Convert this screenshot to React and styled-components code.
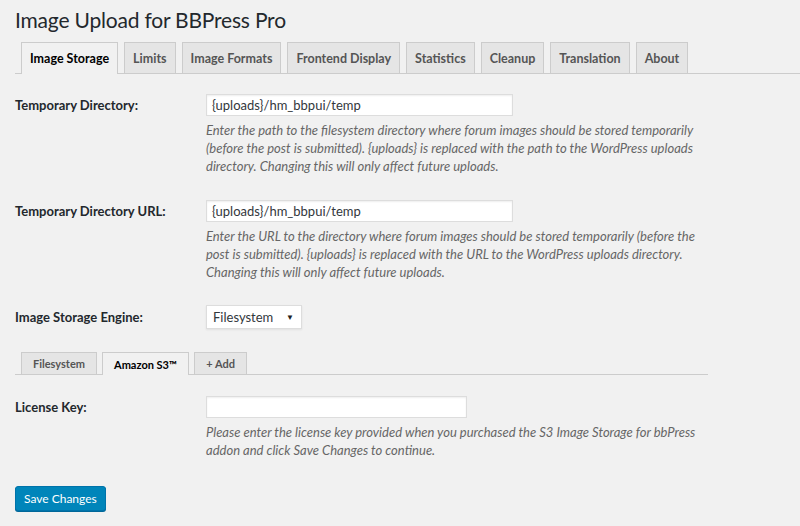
import React from 'react'
import styled, { createGlobalStyle } from 'styled-components'

const Global = createGlobalStyle`
  body {
    margin: 0;
    background: #f1f1f1;
    font-family: Lato, "Open Sans", sans-serif;
    color: #23282d;
  }
`

const Wrap = styled.div`
  padding: 0 15px;
  height: 526px;
  box-sizing: border-box;
  overflow: hidden;
`

const Title = styled.h1`
  margin: 0;
  padding: 6px 0 0;
  font-size: 21px;
  letter-spacing: -0.2px;
  font-weight: 400;
  line-height: 28px;
  color: #23282d;
`

const TabBar = styled.div`
  display: flex;
  gap: ${p => (p.small ? '5px' : '6px')};
  margin-top: ${p => p.top || '8px'};
  padding-left: 6px;
  border-bottom: 1px solid #ccc;
  width: ${p => p.width || 'auto'};
  margin-right: ${p => (p.full ? '-15px' : '0')};
`

const Tab = styled.div`
  box-sizing: border-box;
  padding: ${p => (p.small ? '0 11px' : '0 8px')};
  display: flex;
  align-items: center;
  border: 1px solid #ccc;
  border-bottom: none;
  margin-bottom: -1px;
  background: ${p => (p.active ? '#f1f1f1' : '#e5e5e5')};
  color: ${p => (p.active ? '#000' : '#555')};
  font-size: ${p => (p.small ? '11px' : '12.5px')};
  font-weight: 700;
  position: relative;
  z-index: ${p => (p.active ? 1 : 0)};
  height: ${p => (p.small ? (p.active ? '23px' : '22px') : p.active ? '32px' : '31px')};
`

const Row = styled.div`
  display: flex;
  align-items: flex-start;
  margin-top: ${p => p.top || '0'};
`

const Label = styled.label`
  width: 191px;
  flex-shrink: 0;
  font-size: 13px;
  font-weight: 700;
  color: #23282d;
  line-height: 20px;
  padding-top: ${p => p.pt || '1px'};
`

const Field = styled.div`
  display: flex;
  flex-direction: column;
`

const Input = styled.div`
  box-sizing: border-box;
  width: ${p => p.width};
  height: 22px;
  background: #fff;
  border: 1px solid #ddd;
  box-shadow: inset 0 1px 2px rgba(0, 0, 0, 0.07);
  font-size: 13px;
  line-height: 20px;
  padding: 0 5px;
  color: #32373c;
`

const Select = styled.div`
  box-sizing: border-box;
  width: 96px;
  height: 24px;
  background: #fff;
  border: 1px solid #ddd;
  box-shadow: 0 1px 2px rgba(0, 0, 0, 0.07);
  font-size: 13px;
  padding: 0 7px 0 6px;
  display: flex;
  align-items: center;
  justify-content: space-between;
  color: #32373c;
`

const Arrow = styled.span`
  font-size: 8px;
  color: #222;
`

const Desc = styled.p`
  margin: 5px 0 0;
  max-width: 492px;
  font-size: 13px;
  font-style: italic;
  line-height: 18px;
  color: #666;
`

const Button = styled.button`
  display: block;
  margin-top: 27px;
  height: 25px;
  padding: 0 8px;
  background: #0085ba;
  border: 1px solid #0073aa;
  border-radius: 3px;
  box-shadow: 0 1px 0 #006799;
  color: #fff;
  font-family: Lato, "Open Sans", sans-serif;
  font-size: 12px;
  line-height: 23px;
`

export default function App() {
  const tabs = ['Image Storage', 'Limits', 'Image Formats', 'Frontend Display', 'Statistics', 'Cleanup', 'Translation', 'About']
  return (
    <Wrap>
      <Global />
      <Title>Image Upload for BBPress Pro</Title>
      <TabBar full>
        {tabs.map((t, i) => (
          <Tab key={t} active={i === 0}>{t}</Tab>
        ))}
      </TabBar>

      <Row top="20px">
        <Label>Temporary Directory:</Label>
        <Field>
          <Input width="307px">{'{uploads}/hm_bbpui/temp'}</Input>
          <Desc>
            Enter the path to the filesystem directory where forum images should be stored temporarily
            (before the post is submitted). {'{uploads}'} is replaced with the path to the WordPress uploads
            directory. Changing this will only affect future uploads.
          </Desc>
        </Field>
      </Row>

      <Row top="25px">
        <Label>Temporary Directory URL:</Label>
        <Field>
          <Input width="307px">{'{uploads}/hm_bbpui/temp'}</Input>
          <Desc>
            Enter the URL to the directory where forum images should be stored temporarily (before the
            post is submitted). {'{uploads}'} is replaced with the URL to the WordPress uploads directory.
            Changing this will only affect future uploads.
          </Desc>
        </Field>
      </Row>

      <Row top="24px">
        <Label pt="2px">Image Storage Engine:</Label>
        <Select>
          Filesystem <Arrow>▼</Arrow>
        </Select>
      </Row>

      <TabBar small width="687px" top="23px">
        <Tab small>Filesystem</Tab>
        <Tab small active>Amazon S3™</Tab>
        <Tab small>+ Add</Tab>
      </TabBar>

      <Row top="21px">
        <Label>License Key:</Label>
        <Field>
          <Input width="261px" />
          <Desc>
            Please enter the license key provided when you purchased the S3 Image Storage for bbPress
            addon and click Save Changes to continue.
          </Desc>
        </Field>
      </Row>

      <Button>Save Changes</Button>
    </Wrap>
  )
}
